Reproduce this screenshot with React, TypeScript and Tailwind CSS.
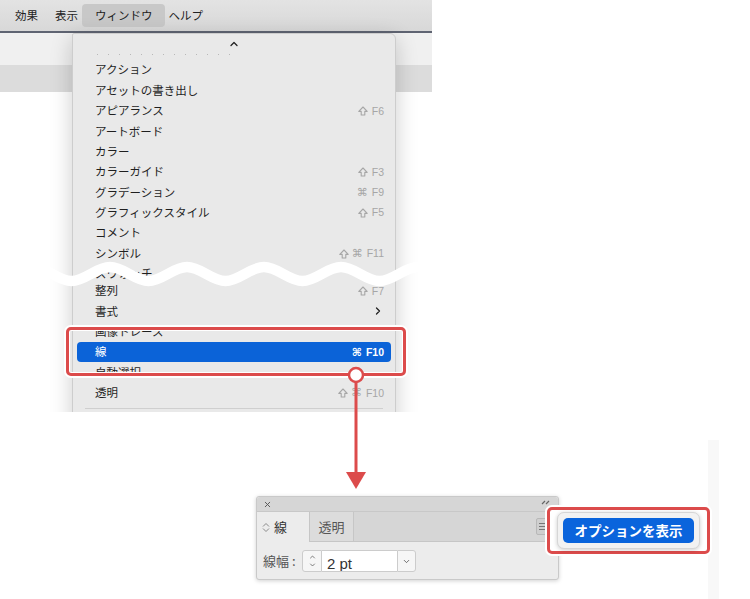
import React from 'react';
import { ChevronUp, ChevronRight, ChevronDown, X } from 'lucide-react';
import clsx from 'clsx';

type Item = { label: string; mods?: string; key?: string; sub?: boolean; clip?: 'top' | 'bottom'; selected?: boolean };

const GROUP_A: Item[] = [
  { label: 'アクション' },
  { label: 'アセットの書き出し' },
  { label: 'アピアランス', mods: '⇧', key: 'F6' },
  { label: 'アートボード' },
  { label: 'カラー' },
  { label: 'カラーガイド', mods: '⇧', key: 'F3' },
  { label: 'グラデーション', mods: '⌘', key: 'F9' },
  { label: 'グラフィックスタイル', mods: '⇧', key: 'F5' },
  { label: 'コメント' },
  { label: 'シンボル', mods: '⇧⌘', key: 'F11' },
  { label: 'スウォッチ' },
];

const GROUP_B: Item[] = [
  { label: '整列', mods: '⇧', key: 'F7' },
  { label: '書式', sub: true },
  { label: '画像トレース', clip: 'bottom' },
  { label: '線', mods: '⌘', key: 'F10', selected: true },
  { label: '自動選択', clip: 'top' },
  { label: '透明', mods: '⇧⌘', key: 'F10' },
];

// white wavy band that "cuts" the menu screenshot
function wavePath() {
  const h = 38.5;
  let x = 110 - 4 * h;
  let up = true;
  let d = `M ${x} 267`;
  for (let i = 0; i < 16; i++) {
    const y0 = up ? 267 : 281;
    const y1 = up ? 281 : 267;
    d += ` C ${x + h * 0.36} ${y0} ${x + h * 0.64} ${y1} ${x + h} ${y1}`;
    x += h;
    up = !up;
  }
  return d;
}
const WAVE = wavePath();

function ShiftIcon() {
  return (
    <svg width="10" height="10" viewBox="0 0 10 10">
      <path d="M5 1 L9.2 5.4 L6.8 5.4 L6.8 9 L3.2 9 L3.2 5.4 L0.8 5.4 Z" fill="none" stroke="currentColor" strokeWidth="1.1" strokeLinejoin="round" />
    </svg>
  );
}

function Shortcut({ mods, k, selected }: { mods?: string; k?: string; selected?: boolean }) {
  if (!k) return null;
  return (
    <span
      className={clsx(
        'flex items-center gap-[3px] [font-family:"Liberation_Sans","DejaVu_Sans",sans-serif]',
        selected ? 'text-white font-bold' : 'text-[#a6a6a6]'
      )}
    >
      {(mods ?? '').split('').map((m, i) =>
        m === '⇧' ? <ShiftIcon key={i} /> : <span key={i} className="text-[11px] leading-none">{m}</span>
      )}
      <span className="text-[10.5px] leading-none ml-[1px]">{k}</span>
    </span>
  );
}

function MenuRow({ item }: { item: Item }) {
  if (item.clip) {
    return (
      <div className={clsx('h-[20.4px] mx-[4px] px-[18px] flex flex-col', item.clip === 'bottom' ? 'justify-end' : 'justify-start')}>
        <div className={clsx('overflow-hidden flex flex-col', item.clip === 'bottom' ? 'h-[11px] justify-end' : 'h-[9.5px] justify-start')}>
          <div className="h-[20.4px] shrink-0 flex items-center text-[11.5px] text-[#1f1f1f]">{item.label}</div>
        </div>
      </div>
    );
  }
  return (
    <div
      className={clsx(
        'h-[20.4px] mx-[4px] pl-[18px] pr-[7px] flex items-center justify-between rounded-[4px] text-[11.5px]',
        item.selected ? 'bg-[#0b63d8] text-white' : 'text-[#1f1f1f]'
      )}
    >
      <span>{item.label}</span>
      {item.sub ? (
        <ChevronRight className="w-[12px] h-[12px] text-[#222]" strokeWidth={2.6} />
      ) : (
        <Shortcut mods={item.mods} k={item.key} selected={item.selected} />
      )}
    </div>
  );
}

export default function App() {
  return (
    <div className='relative w-[750px] h-[599px] bg-white overflow-hidden [font-family:"Noto_Sans_CJK_JP","Liberation_Sans",sans-serif]'>
      {/* menu screenshot */}
      <div className="relative w-[432px] h-[412px] overflow-hidden">
        <div className="h-[31px] bg-gradient-to-b from-[#e3e3e3] to-[#d8d8d8] flex items-center pl-[15px] text-[11.5px] text-[#222]">
          <span>効果</span>
          <span className="ml-[17px]">表示</span>
          <span className="ml-[4px] h-[23px] pl-[13px] pr-[12px] flex items-center rounded-[4px] bg-[#c8c8c8]">ウィンドウ</span>
          <span className="ml-[4px]">ヘルプ</span>
        </div>
        <div className="h-[2px] bg-[#5f6472]" />
        <div className="h-[32px] bg-[#f0f0f0]" />
        <div className="h-[27px] bg-[#dcdcdc]" />

        <div className="absolute left-[72px] top-[33px] w-[324px] h-[420px] bg-[#e9e9e9] border border-[#cdcdcd] rounded-tr-[6px] rounded-tl-[2px] shadow-[0_6px_22px_rgba(0,0,0,0.2)]">
          <div className="h-[20px] flex items-center justify-center">
            <ChevronUp className="w-[12px] h-[12px] text-[#222]" strokeWidth={2.6} />
          </div>
          <div className="ml-[24px] h-px flex gap-[10px]">
            {[...Array(13)].map((_, i) => (
              <div key={i} className="w-px h-px bg-[#b8b8b8]" />
            ))}
          </div>
          <div className="mt-[4.8px]">
            {GROUP_A.map(it => <MenuRow key={it.label} item={it} />)}
          </div>
          <div className="mt-[-3.4px]">
            {GROUP_B.map(it => <MenuRow key={it.label} item={it} />)}
          </div>
          <div className="mt-[4.8px] mx-[12px] h-px bg-[#cfcfcf]" />
        </div>

        <svg className="absolute left-0 top-0" width="432" height="412">
          <path d={WAVE} fill="none" stroke="#ffffff" strokeWidth="10.5" />
        </svg>
      </div>

      {/* highlight on 線 row */}
      <div className="absolute left-[66px] top-[327px] w-[340px] h-[49px] border-[3px] border-[#dc4b4b] rounded-[5px] shadow-[0_0_0_2px_#ffffff,inset_0_0_0_1px_#ffffff]" />

      {/* connector + arrow */}
      <svg className="absolute left-[340px] top-[366px]" width="32" height="126">
        <line x1="16" y1="16" x2="16" y2="108" stroke="#dc4b4b" strokeWidth="3" />
        <polygon points="6,106 26,106 16,123" fill="#dc4b4b" />
        <circle cx="16" cy="9" r="7" fill="#ffffff" stroke="#dc4b4b" strokeWidth="2.5" />
      </svg>

      {/* faint strip at right */}
      <div className="absolute left-[708px] top-[440px] w-[11px] h-[159px] bg-[#f8f8f8]" />

      {/* stroke panel */}
      <div className="relative mt-[84px] ml-[256px] w-[303px] h-[84px] rounded-[3px] bg-[#ececec] border border-[#c9c9c9] shadow-[0_1px_4px_rgba(0,0,0,0.18)]">
        <div className="h-[14px] bg-[#d6d6d6] rounded-t-[3px] flex items-center justify-between pl-[6px] pr-[8px]">
          <X className="w-[9px] h-[9px] text-[#555]" strokeWidth={2.5} />
          <svg width="9" height="8" viewBox="0 0 9 8" className="text-[#666]">
            <path d="M4 1 L1 4 M8 1 L5 4" stroke="currentColor" strokeWidth="1.2" fill="none" />
          </svg>
        </div>
        <div className="h-[31px] flex bg-[#d6d6d6] border-t border-[#c8c8c8]">
          <div className="w-[52px] bg-[#ececec] flex items-center pl-[5px] gap-[4px]">
            <svg width="8" height="11" viewBox="0 0 8 11" className="text-[#8a8a8a]">
              <path d="M1 4.5 L4 1.5 L7 4.5 M1 6.5 L4 9.5 L7 6.5" stroke="currentColor" strokeWidth="1" fill="none" />
            </svg>
            <span className="text-[13px] text-[#333]">線</span>
          </div>
          <div className="w-[45px] bg-[#dcdcdc] border-x border-b border-[#c6c6c6] flex items-center justify-center text-[13px] text-[#555]">透明</div>
          <div className="flex-1 border-b border-[#c6c6c6] flex items-center justify-end pr-[9px]">
            <div className="w-[13px] h-[17px] rounded-[2px] bg-[#cfcfcf] border border-[#b8b8b8] flex flex-col justify-center gap-[2px] pl-[2px]">
              <div className="w-[6px] h-px bg-[#777]" />
              <div className="w-[6px] h-px bg-[#777]" />
              <div className="w-[6px] h-px bg-[#777]" />
            </div>
          </div>
        </div>
        <div className="flex items-center pl-[6px] pt-[8px]">
          <span className="text-[13px] text-[#555] w-[39px]">線幅 :</span>
          <div className="w-[20px] h-[22px] bg-[#f6f6f6] border border-[#cccccc] rounded-l-[3px] flex flex-col items-center justify-center">
            <ChevronUp className="w-[9px] h-[8px] text-[#444]" strokeWidth={2} />
            <ChevronDown className="w-[9px] h-[8px] text-[#444]" strokeWidth={2} />
          </div>
          <div className="w-[75px] h-[22px] bg-white border-y border-[#cccccc] overflow-hidden pl-[5px] text-[15px] leading-[25px] text-[#333] [font-family:'Liberation_Sans',sans-serif]">2 pt</div>
          <div className="w-[19px] h-[22px] bg-[#f6f6f6] border border-[#cccccc] rounded-r-[3px] flex items-center justify-center">
            <ChevronDown className="w-[9px] h-[9px] text-[#444]" strokeWidth={2} />
          </div>
        </div>

        {/* options popup */}
        <div className="absolute left-[290px] top-[10px] w-[163px] h-[47px] border-[3px] border-[#dc4b4b] rounded-[5px] bg-white px-[7px] py-[2px] shadow-[0_0_0_2px_#ffffff]">
          <div className="h-full bg-[#f2f2f2] rounded-[7px] border border-[#d6d6d6] shadow-[0_1px_4px_rgba(0,0,0,0.2)] p-[5px]">
            <div className="h-full rounded-[5px] bg-[#0a64dc] flex items-center justify-center text-white text-[13.5px] font-bold">オプションを表示</div>
          </div>
        </div>
      </div>
    </div>
  );
}
